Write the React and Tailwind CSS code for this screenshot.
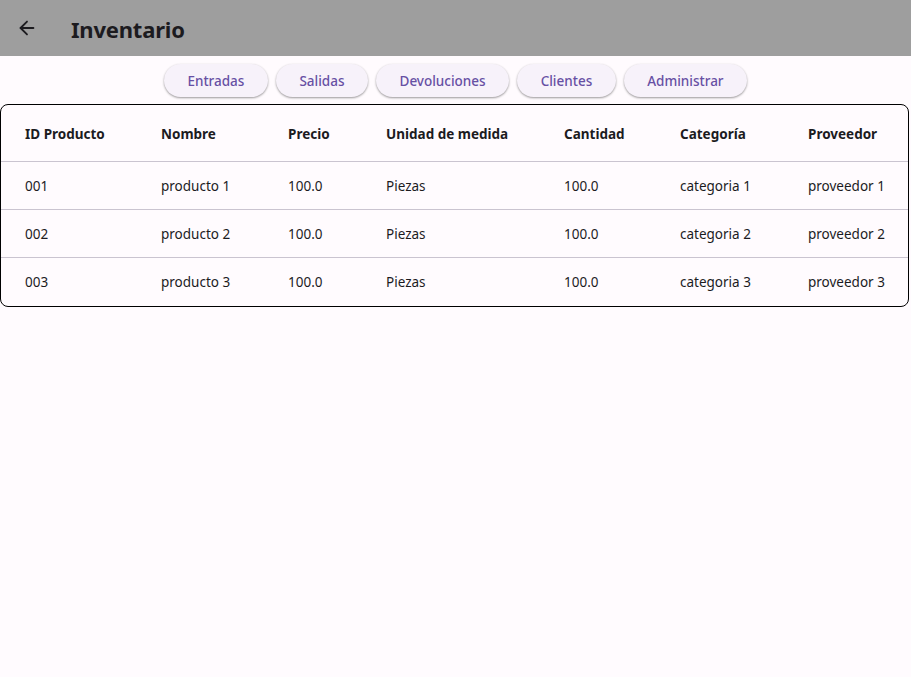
import { ArrowLeft } from 'lucide-react';

const tabs = ['Entradas', 'Salidas', 'Devoluciones', 'Clientes', 'Administrar'];

const columns = ['ID Producto', 'Nombre', 'Precio', 'Unidad de medida', 'Cantidad', 'Categoría', 'Proveedor'];

const rows = [
  ['001', 'producto 1', '100.0', 'Piezas', '100.0', 'categoria 1', 'proveedor 1'],
  ['002', 'producto 2', '100.0', 'Piezas', '100.0', 'categoria 2', 'proveedor 2'],
  ['003', 'producto 3', '100.0', 'Piezas', '100.0', 'categoria 3', 'proveedor 3'],
];

const grid = 'grid grid-cols-[160px_127px_98px_178px_116px_128px_1fr] items-center';

export default function App() {
  return (
    <div className="min-h-[677px] w-full bg-[#fffbfe] text-[#1c1b1f] font-['Segoe_UI','Noto_Sans',sans-serif]">
      {/* App bar */}
      <div className="h-14 bg-[#9e9e9e] flex items-center">
        <div className="w-[54px] flex justify-center">
          <ArrowLeft size={22} strokeWidth={2} className="text-[#1c1b1f]" />
        </div>
        <h1 className="ml-[17px] pt-[2px] text-[22px] font-bold tracking-[-0.2px]">Inventario</h1>
      </div>

      {/* Tabs */}
      <div className="flex justify-center gap-2 pt-2 pb-[7px]">
        {tabs.map(t => (
          <button
            key={t}
            className="h-[33px] px-[23.5px] rounded-full bg-[#f7f2fa] text-[#6750a4] text-[13.5px] font-medium pt-px shadow-[0_1px_2px_rgba(0,0,0,0.3),0_1px_3px_rgba(0,0,0,0.12)]"
          >
            {t}
          </button>
        ))}
      </div>

      {/* Table */}
      <div className="mr-[2px] border border-black rounded-lg overflow-hidden">
        <div className={`${grid} h-[57px] pt-[2px] border-b border-[#cac4d0] text-[13.5px] font-bold`}>
          {columns.map((c, i) => (
            <div key={c} className={i === 0 ? 'pl-6' : ''}>{c}</div>
          ))}
        </div>
        {rows.map((r, ri) => (
          <div
            key={r[0]}
            className={`${grid} h-12 pt-px text-[13.5px] ${ri < rows.length - 1 ? 'border-b border-[#cac4d0]' : ''}`}
          >
            {r.map((v, i) => (
              <div key={i} className={i === 0 ? 'pl-6' : ''}>{v}</div>
            ))}
          </div>
        ))}
      </div>
    </div>
  );
}
